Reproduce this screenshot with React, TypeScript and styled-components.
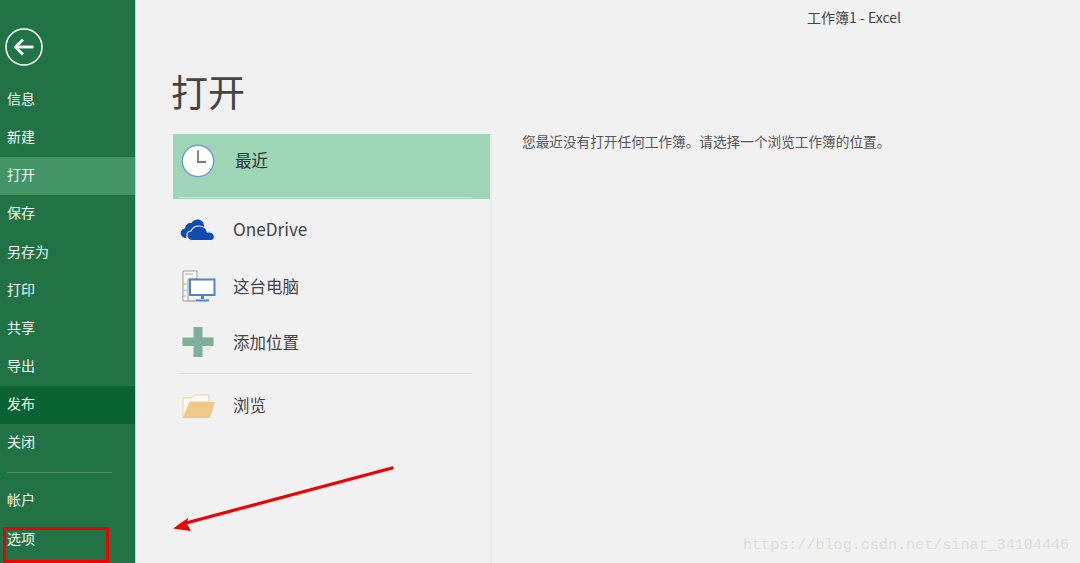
import { createGlobalStyle, styled } from "styled-components";

const GlobalStyle = createGlobalStyle`
  html, body {
    margin: 0;
    padding: 0;
    height: 100%;
    overflow: hidden;
    background: #f1f1f1;
  }
  #root {
    height: 100%;
  }
`;

const FONT = `"Noto Sans CJK SC", "Noto Sans", sans-serif`;

const Page = styled.div`
  position: relative;
  display: flex;
  width: 1080px;
  height: 563px;
  overflow: hidden;
  font-family: ${FONT};
`;

const Sidebar = styled.nav`
  flex: 0 0 136px;
  display: flex;
  flex-flow: column nowrap;
  padding-top: 28px;
  box-sizing: border-box;
  background: #217346;
  border-right: 1px solid #c5d5cc;
`;

const BackButton = styled.div`
  width: 38px;
  height: 38px;
  margin: 0 0 15px 5px;

  svg {
    display: block;
  }
`;

const NavItem = styled.div<{ $state?: "open" | "publish" }>`
  height: 38.15px;
  line-height: 35px;
  padding-left: 7px;
  font-size: 14px;
  color: #f2f7f4;
  background: ${({ $state }) =>
    $state === "open" ? "#439467" : $state === "publish" ? "#0a6332" : "transparent"};
`;

const NavDivider = styled.div`
  height: 1px;
  margin: 10px 23px 9px 7px;
  background: #4a8c68;
`;

const Main = styled.main`
  flex: 1;
  display: flex;
  flex-flow: column nowrap;
  min-width: 0;
`;

const WindowTitle = styled.div`
  height: 34px;
  padding: 8px 0 0 671px;
  box-sizing: border-box;
  font-size: 14px;
  line-height: 19px;
  color: #444;
  white-space: nowrap;
`;

const Heading = styled.h1`
  height: 100px;
  margin: 0;
  padding: 27px 0 0 35px;
  box-sizing: border-box;
  font-size: 37px;
  line-height: 60px;
  font-weight: 400;
  color: #444;
`;

const Content = styled.div`
  flex: 1;
  display: flex;
`;

const Places = styled.div`
  flex: 0 0 318px;
  margin-left: 37px;
  box-sizing: border-box;
  border-right: 2px solid #e9e9e9;
`;

const RecentRow = styled.div`
  position: relative;
  display: flex;
  align-items: center;
  width: 317px;
  height: 65px;
  padding: 0 0 11px 8px;
  box-sizing: border-box;
  background: #9fd5b7;
  font-size: 16.5px;
  color: #333;

  svg {
    display: block;
  }

  span {
    margin: -3px 0 0 20px;
    line-height: 24px;
  }

  &::after {
    content: "";
    position: absolute;
    left: 6px;
    right: 18px;
    bottom: 1px;
    height: 1px;
    background: #cfe6d9;
  }
`;

const PlaceRow = styled.div<{ $height: number }>`
  display: flex;
  align-items: center;
  height: ${({ $height }) => $height}px;
  padding-left: 7px;
  font-size: 16.5px;
  color: #444;
`;

const IconSlot = styled.div<{ $lift?: boolean; $inset?: boolean }>`
  flex: 0 0 53px;
  box-sizing: border-box;
  margin-top: ${({ $lift }) => ($lift ? "-2px" : "0")};
  padding-left: ${({ $inset }) => ($inset ? "2px" : "0")};

  svg {
    display: block;
  }
`;

const PlaceLabel = styled.span<{ $latin?: boolean }>`
  margin-top: -2px;
  line-height: 24px;
  font-size: ${({ $latin }) => ($latin ? "17.2px" : "16.5px")};
`;

const PlaceDivider = styled.div`
  height: 1px;
  margin: 0 18px 0 6px;
  background: #dedede;
`;

const EmptyMessage = styled.p`
  margin: -2px 0 0 30px;
  font-size: 13.65px;
  line-height: 18px;
  color: #555;
  white-space: nowrap;
`;

const HighlightBox = styled.div`
  position: absolute;
  left: 3px;
  top: 527px;
  width: 106px;
  height: 36px;
  box-sizing: border-box;
  border: 3px solid #f00000;
`;

const ArrowOverlay = styled.svg`
  position: absolute;
  left: 170px;
  top: 462px;
`;

const Watermark = styled.div`
  position: absolute;
  left: 743px;
  top: 535px;
  font-family: "Liberation Mono", monospace;
  font-size: 15.1px;
  line-height: 20px;
  color: #dcdcda;
  white-space: nowrap;
`;

const BackIcon = () => (
  <svg width="38" height="38" viewBox="0 0 38 38" fill="none" stroke="#fff">
    <circle cx="19" cy="19" r="18" strokeWidth="1.5" />
    <path d="M10.5 19H28.5" strokeWidth="2.8" />
    <path d="M18 11.5L10.5 19L18 26.5" strokeWidth="2.8" />
  </svg>
);

const ClockIcon = () => (
  <svg width="34" height="34" viewBox="0 0 34 34" fill="none">
    <circle cx="17" cy="17" r="15.7" fill="#fff" stroke="#6f9dc9" strokeWidth="1.4" />
    <path d="M17 6.5V18H25" stroke="#777" strokeWidth="1.8" />
  </svg>
);

const CloudIcon = () => (
  <svg width="36" height="24" viewBox="0 0 36 24">
    <path
      fill="#0f4bb0"
      d="M5 20C1.5 19 0 16 1 13.5C1.8 11.5 3.5 10.5 5 10.5C5.5 6.5 8.5 4.5 11.5 5C13 2.5 15.5 1 18.5 1.5C21.5 2 23.5 4 24 7L24 10L10 14L6 20Z"
    />
    <path
      fill="#0f4bb0"
      stroke="#f1f1f1"
      strokeWidth="1.2"
      d="M12 22.5C8.5 22.5 6.5 19.5 7 16.5C7.4 14.3 9.2 13 11 13C12.5 9.5 15.5 8 19 8C23 8 26.5 10.5 27.3 14C29.5 13.5 32 14 33.5 15.8C35.5 18.5 34.5 22.5 31 22.5Z"
    />
  </svg>
);

const ComputerIcon = () => (
  <svg width="34" height="33" viewBox="0 0 34 33" fill="none">
    <path d="M1 1H15V9H6V31H1Z" fill="#fafafa" stroke="#9b9b9b" />
    <path d="M3 4H11M1.5 14H5M1.5 20H5M1.5 26H4" stroke="#a8a8a8" />
    <path d="M6 31H13" stroke="#a8a8a8" strokeWidth="1.5" />
    <rect x="8" y="9.5" width="24.5" height="15.5" fill="#fff" stroke="#4f86bf" strokeWidth="2" />
    <path d="M19 25.5H22V29H19Z" fill="#4f86bf" />
    <path d="M13.5 29.5H27V31.5H13.5Z" fill="#4f86bf" />
  </svg>
);

const AddIcon = () => (
  <svg width="32" height="30" viewBox="0 0 32 30">
    <path
      fill="#7eaf9b"
      d="M11.5 0H20.5V10.5H31.5V19H20.5V30H11.5V19H0.5V10.5H11.5Z"
    />
  </svg>
);

const FolderIcon = () => (
  <svg width="34" height="25" viewBox="0 0 34 25">
    <path
      d="M1 24V4H9L12 1H27V8H8L1 24Z"
      fill="#fbfaf5"
      stroke="#eccf98"
      strokeWidth="1"
    />
    <path d="M7.5 8H33L28 24H1Z" fill="#efc98a" />
  </svg>
);

const navTop = [
  { label: "信息" },
  { label: "新建" },
  { label: "打开", state: "open" as const },
  { label: "保存" },
  { label: "另存为" },
  { label: "打印" },
  { label: "共享" },
  { label: "导出" },
  { label: "发布", state: "publish" as const },
  { label: "关闭" },
];

const navBottom = ["帐户", "选项"];

export default function App() {
  return (
    <>
      <GlobalStyle />
      <Page>
        <Sidebar>
          <BackButton>
            <BackIcon />
          </BackButton>
          {navTop.map((item) => (
            <NavItem key={item.label} $state={item.state}>
              {item.label}
            </NavItem>
          ))}
          <NavDivider />
          {navBottom.map((label) => (
            <NavItem key={label}>{label}</NavItem>
          ))}
        </Sidebar>

        <Main>
          <WindowTitle>工作簿1 - Excel</WindowTitle>
          <Heading>打开</Heading>
          <Content>
            <Places>
              <RecentRow>
                <ClockIcon />
                <span>最近</span>
              </RecentRow>
              <PlaceRow $height={62}>
                <IconSlot>
                  <CloudIcon />
                </IconSlot>
                <PlaceLabel $latin>OneDrive</PlaceLabel>
              </PlaceRow>
              <PlaceRow $height={52}>
                <IconSlot $lift $inset>
                  <ComputerIcon />
                </IconSlot>
                <PlaceLabel>这台电脑</PlaceLabel>
              </PlaceRow>
              <PlaceRow $height={60}>
                <IconSlot $lift $inset>
                  <AddIcon />
                </IconSlot>
                <PlaceLabel>添加位置</PlaceLabel>
              </PlaceRow>
              <PlaceDivider />
              <PlaceRow $height={64}>
                <IconSlot $inset>
                  <FolderIcon />
                </IconSlot>
                <PlaceLabel>浏览</PlaceLabel>
              </PlaceRow>
            </Places>
            <EmptyMessage>
              您最近没有打开任何工作簿。请选择一个浏览工作簿的位置。
            </EmptyMessage>
          </Content>
        </Main>

        <HighlightBox />
        <ArrowOverlay width="230" height="74" viewBox="0 0 230 74">
          <path d="M222 6L16 61" stroke="#f00000" strokeWidth="3.2" strokeLinecap="round" fill="none" />
          <path d="M3 66.5L18 56L17 62L21 69Z" fill="#f00000" />
        </ArrowOverlay>
        <Watermark>https://blog.csdn.net/sinat_34104446</Watermark>
      </Page>
    </>
  );
}
